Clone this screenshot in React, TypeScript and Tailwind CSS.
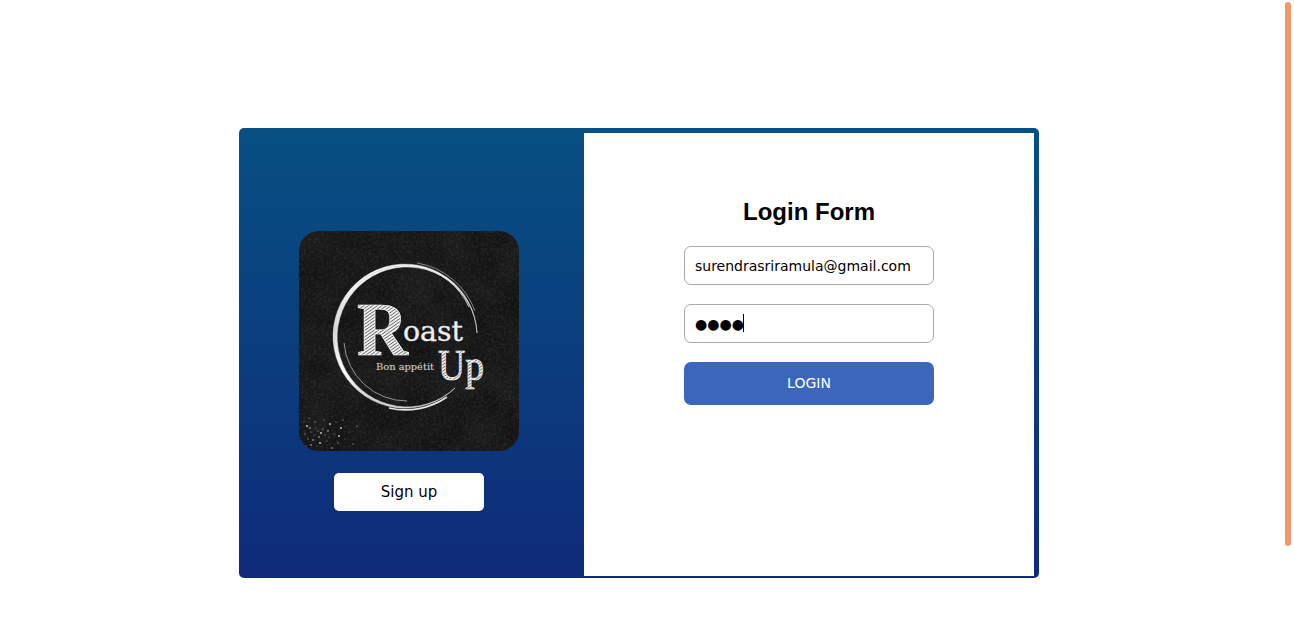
import React from 'react';

const specks = [
  [8, 190], [12, 196], [16, 186], [20, 201], [24, 193], [28, 205], [31, 188], [35, 198], [39, 207], [14, 204],
  [6, 198], [18, 210], [42, 192], [46, 203], [25, 184], [33, 212], [10, 182], [50, 196], [22, 197], [37, 186],
  [54, 208], [29, 195], [44, 184], [17, 192], [40, 200], [5, 186], [58, 190], [12, 209], [9, 203], [15, 199],
  [21, 207], [26, 199], [7, 210], [11, 192], [19, 195], [30, 201],
];

const RoastUpLogo: React.FC = () => (
  <svg viewBox="0 0 220 220" className="w-[220px] h-[220px] rounded-[20px] block">
    <defs>
      <filter id="chalk" x="0" y="0" width="100%" height="100%">
        <feTurbulence type="fractalNoise" baseFrequency="0.4" numOctaves="3" seed="4" />
        <feColorMatrix values="0 0 0 0 1  0 0 0 0 1  0 0 0 0 1  1 0 0 0 -0.4" />
      </filter>
      <filter id="blotch" x="0" y="0" width="100%" height="100%">
        <feTurbulence type="fractalNoise" baseFrequency="0.03" numOctaves="3" seed="9" />
        <feColorMatrix values="0 0 0 0 0  0 0 0 0 0  0 0 0 0 0  1.2 0 0 0 -0.35" />
      </filter>
      <pattern id="hatch" width="2.6" height="2.6" patternUnits="userSpaceOnUse" patternTransform="rotate(-35)">
        <rect width="2.6" height="2.6" fill="#666666" />
        <rect width="2.6" height="1.7" fill="#f6f6f6" />
      </pattern>
      <linearGradient id="ring" x1="0" y1="0" x2="0" y2="1">
        <stop offset="0" stopColor="#ffffff" />
        <stop offset="0.45" stopColor="#d6d6d6" />
        <stop offset="0.75" stopColor="#ffffff" />
        <stop offset="1" stopColor="#c4c4c4" />
      </linearGradient>
    </defs>
    <rect width="220" height="220" fill="#1b1b1b" />
    <rect width="220" height="220" filter="url(#blotch)" opacity="0.5" />
    <rect width="220" height="220" filter="url(#chalk)" opacity="0.17" />
    {specks.map(([x, y], i) => (
      <circle key={i} cx={x} cy={y + 5} r={i % 3 === 0 ? 0.9 : 0.55} fill="#efefef" opacity={i % 2 === 0 ? 0.85 : 0.5} />
    ))}

    {/* ring, thick on the left and thinning out towards both ends */}
    <path d="M178 102 A72 72 0 1 0 156 157 A70 70 0 1 1 178 102Z" fill="url(#ring)" stroke="#f0f0f0" strokeWidth="0.5" />
    <path d="M45 112 A63 63 0 0 0 108 170" fill="none" stroke="#a0a0a0" strokeWidth="0.9" />
    <path d="M58 54 A70 70 0 0 1 170 76" fill="none" stroke="#d8d8d8" strokeWidth="1" />
    <path d="M118 32 A75 75 0 0 1 176 80" fill="none" stroke="#b0b0b0" strokeWidth="0.7" />
    <path d="M90 177 A73 73 0 0 0 148 166" fill="none" stroke="#e4e4e4" strokeWidth="1.6" />

    <text x="58" y="124" fontFamily="'Liberation Serif', serif" fontWeight="700" fontSize="76" textLength="51" lengthAdjust="spacingAndGlyphs" fill="url(#hatch)" stroke="#ffffff" strokeWidth="0.7">R</text>
    <text x="104" y="110" fontFamily="'DejaVu Serif', serif" fontSize="28" textLength="60" lengthAdjust="spacingAndGlyphs" fill="#efefef" stroke="#efefef" strokeWidth="0.3">oast</text>
    <text x="139" y="149" fontFamily="'Liberation Serif', serif" fontSize="44" textLength="46" lengthAdjust="spacingAndGlyphs" fill="url(#hatch)" stroke="#f5f5f5" strokeWidth="0.7">Up</text>
    <text x="77" y="139" fontFamily="'DejaVu Serif', serif" fontSize="9.5" textLength="58" lengthAdjust="spacingAndGlyphs" fill="#d2d2d2" stroke="#d2d2d2" strokeWidth="0.12">Bon appétit</text>
  </svg>
);

export default function App() {
  return (
    <div className="relative h-screen overflow-hidden bg-white">
      <div className="w-[1278px] flex justify-center pt-[128px] pb-[137px]">
        <div className="flex w-[800px] h-[450px] rounded-[5px] bg-gradient-to-b from-[#074f82] to-[#0f2a79] pt-[5px] pr-[5px] pb-[2px]">
          <div className="w-[345px] pr-[5px] flex flex-col items-center pt-[98px]">
            <RoastUpLogo />
            <button className="mt-[22px] w-[150px] h-[38px] rounded-[5px] bg-white text-black text-[15px] font-['DejaVu_Sans',sans-serif]">
              Sign up
            </button>
          </div>
          <div className="flex-1 bg-white flex flex-col items-center pt-[62px]">
            <h1 className="text-[24px] leading-[34px] font-bold text-black font-['Liberation_Sans',sans-serif]">Login Form</h1>
            <form className="mt-[17px] w-[250px] flex flex-col font-['DejaVu_Sans',sans-serif]">
              <input
                type="text"
                readOnly
                value="surendrasriramula@gmail.com"
                className="w-full h-[39px] px-[10px] rounded-[7px] border border-[#a9a9a9] text-[14px] text-black outline-none"
              />
              <div className="relative mt-[19px]">
                <input
                  type="text"
                  readOnly
                  value="●●●●"
                  className="w-full h-[39px] px-[10px] rounded-[7px] border border-[#a9a9a9] text-[14px] text-black outline-none"
                />
                <span className="absolute left-[59px] top-[10px] w-px h-[18px] bg-black" />
              </div>
              <button type="button" className="mt-[19px] h-[43px] rounded-[7px] bg-[#3a66bb] text-white text-[14px]">
                LOGIN
              </button>
            </form>
          </div>
        </div>
      </div>
      {/* page scrollbar thumb */}
      <div className="absolute left-[1285px] top-[2px] w-[6px] h-[544px] rounded-[3px] bg-[#f4976c]" />
    </div>
  );
}
